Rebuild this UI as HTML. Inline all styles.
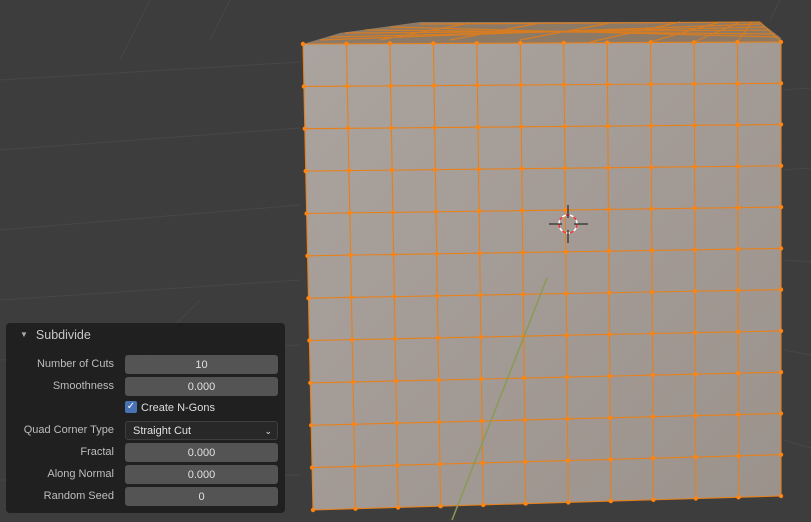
<!DOCTYPE html>
<html><head><meta charset="utf-8"><style>
body{margin:0;width:811px;height:522px;overflow:hidden;background:#3d3d3d;font-family:"Liberation Sans","DejaVu Sans",sans-serif}
svg{position:absolute;left:0;top:0}
.panel{position:absolute;left:6px;top:323px;width:279px;height:190px;background:rgba(30,30,30,0.93);border-radius:4px}
.hd{position:absolute;left:14px;top:5px;color:#c8c8c8;font-size:12.5px}
.hd span{font-size:8px;margin-right:8px;vertical-align:2px;color:#aaa}
.row{position:absolute;left:0;width:279px;height:19px}
.lb{position:absolute;right:171px;top:3px;color:#bdbdbd;font-size:11px;white-space:nowrap}
.fd{position:absolute;left:119px;width:153px;height:19px;top:0;background:#545454;border-radius:3px;color:#e0e0e0;font-size:11px;text-align:center;line-height:20px}
.dd{background:#282828;border:1px solid #3e3e3e;text-align:left;padding-left:7px;box-sizing:border-box;line-height:18px}
.cb{position:absolute;left:119px;top:2px;width:12px;height:12px;background:#4772b3;border-radius:2px;color:#fff;font-size:10px;line-height:12px;text-align:center}
</style></head><body>
<svg width="811" height="522" id="s">
<g stroke="#474747" stroke-width="1" fill="none">
<path d="M0 80 L300 62 M0 150 L300 128 M0 230 L300 205 M0 300 L300 280 M0 360 L300 345 M783 90 L811 88 M783 170 L811 168 M783 260 L811 262 M783 350 L811 355 M783 440 L811 448 M0 480 L300 475"/>
<path d="M150 0 L120 60 M230 0 L210 40 M780 0 L770 20 M200 300 L170 330"/>
</g>
<defs><linearGradient id="g" x1="0" y1="0" x2="1" y2="1"><stop offset="0" stop-color="#aba39e"/><stop offset="1" stop-color="#9b928c"/></linearGradient></defs>
<polygon points="303,44 340,33 420,22 760,22 781,38 781,42" fill="#8c7a66"/>
<g stroke="#e07d1a" stroke-width="1.2" opacity="0.9">
<path d="M320 40 L760 24 M330 37 L765 27 M345 33 L770 30 M365 30 L775 34 M390 27 L778 37 M420 24 L760 22 M380 40 L470 23 M450 40 L540 23 M520 40 L610 23 M590 42 L680 22 M650 42 L720 22 M694 42 L740 22 M737 42 L752 22 M781 42 L760 22"/>
</g>
<polygon points="303,44 781,42 781,496 313,510" fill="url(#g)"/>
<g stroke="#e8801a" stroke-width="1.1" fill="none">
<path d="M303 44L313 510M346.5 43.8L355.5 508.7M389.9 43.6L398.1 507.5M433.4 43.5L440.6 506.2M476.8 43.3L483.2 504.9M520.3 43.1L525.7 503.6M563.7 42.9L568.3 502.4M607.2 42.7L610.8 501.1M650.6 42.5L653.4 499.8M694.1 42.4L695.9 498.5M737.5 42.2L738.5 497.3M781 42L781 496"/>
<path d="M303 44L781 42M303.9 86.4L781 83.3M304.8 128.7L781 124.5M305.7 171.1L781 165.8M306.6 213.5L781 207.1M307.5 255.8L781 248.4M308.5 298.2L781 289.6M309.4 340.5L781 330.9M310.3 382.9L781 372.2M311.2 425.3L781 413.5M312.1 467.6L781 454.7M313 510L781 496"/>
</g>
<g id="dots" fill="#ff8410"></g>
<line x1="547" y1="278" x2="452" y2="520" stroke="#8a9a55" stroke-width="1.5"/>
<g fill="none">
<circle cx="568" cy="224" r="9" stroke="#fff" stroke-width="1.5"/>
<circle cx="568" cy="224" r="9" stroke="#e33" stroke-width="1.5" stroke-dasharray="4 4"/>
<path d="M549 224H562M574 224H588M568 205V218M568 230V243" stroke="#111" stroke-width="1"/>
</g>
</svg>
<script>
var g=document.getElementById('dots'),h='';
for(var i=0;i<12;i++)for(var j=0;j<12;j++){var u=i/11,v=j/11;
var x=(1-v)*(303+478*u)+v*(313+468*u),y=(1-u)*(44+466*v)+u*(42+454*v);
h+='<circle cx="'+x.toFixed(1)+'" cy="'+y.toFixed(1)+'" r="2.2"/>';}
g.innerHTML=h;
</script>
<div class="panel">
<div class="hd"><span>▼</span>Subdivide</div>
<div class="row" style="top:32px"><div class="lb">Number of Cuts</div><div class="fd">10</div></div>
<div class="row" style="top:54px"><div class="lb">Smoothness</div><div class="fd">0.000</div></div>
<div class="row" style="top:76px"><div class="cb">✓</div><div style="position:absolute;left:135px;top:3px;color:#ddd;font-size:11px">Create N-Gons</div></div>
<div class="row" style="top:98px"><div class="lb">Quad Corner Type</div><div class="fd dd">Straight Cut<span style="position:absolute;right:5px;top:0;font-size:9px">⌄</span></div></div>
<div class="row" style="top:120px"><div class="lb">Fractal</div><div class="fd">0.000</div></div>
<div class="row" style="top:142px"><div class="lb">Along Normal</div><div class="fd">0.000</div></div>
<div class="row" style="top:164px"><div class="lb">Random Seed</div><div class="fd">0</div></div>
</div>
</body></html>
